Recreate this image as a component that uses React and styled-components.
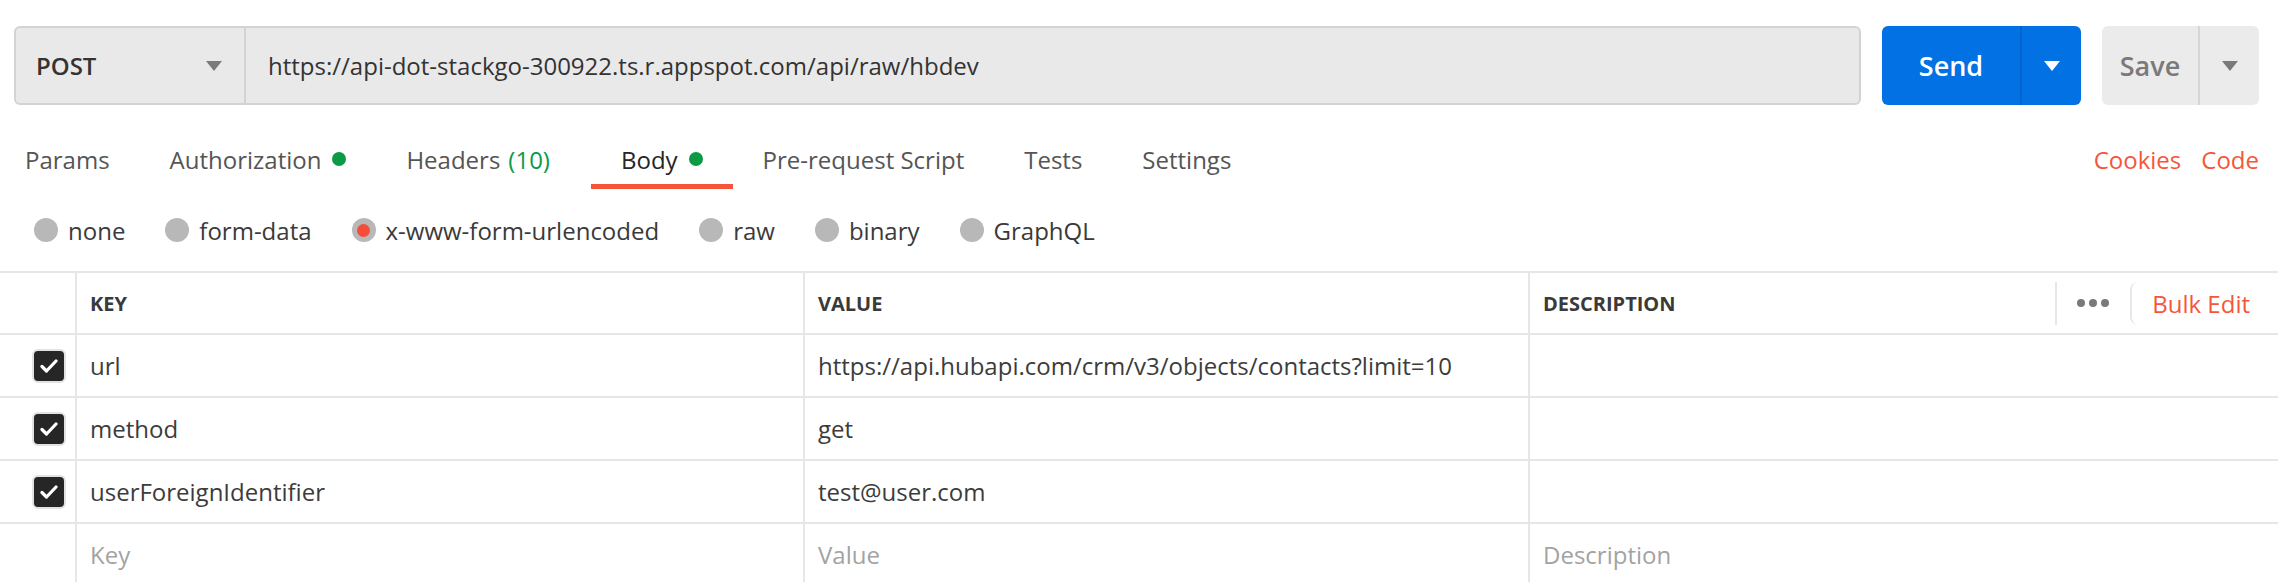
import React from "react";
import styled, { createGlobalStyle } from "styled-components";

const tabs = [
  { label: "Params" },
  { label: "Authorization", dot: true },
  { label: "Headers", count: "(10)" },
  { label: "Body", dot: true, active: true },
  { label: "Pre-request Script" },
  { label: "Tests" },
  { label: "Settings" },
];

const bodyModes = ["none", "form-data", "x-www-form-urlencoded", "raw", "binary", "GraphQL"];

const rows = [
  { key: "url", value: "https://api.hubapi.com/crm/v3/objects/contacts?limit=10" },
  { key: "method", value: "get" },
  { key: "userForeignIdentifier", value: "test@user.com" },
];

function Caret({ color }) {
  return (
    <svg width="16" height="10" viewBox="0 0 16 10">
      <path d="M0 0 H16 L8 10 Z" fill={color} />
    </svg>
  );
}

function Check() {
  return (
    <svg width="18" height="14" viewBox="0 0 18 14">
      <path
        d="M2 7.5 L6.5 12 L16 2"
        fill="none"
        stroke="#fff"
        strokeWidth="3.2"
        strokeLinecap="round"
        strokeLinejoin="round"
      />
    </svg>
  );
}

export default function App() {
  return (
    <>
      <GlobalStyle />
      <Page>
        <TopBar>
          <RequestBox>
            <MethodSelect>
              <span>POST</span>
              <Caret color="#7a7a7a" />
            </MethodSelect>
            <UrlText>https://api-dot-stackgo-300922.ts.r.appspot.com/api/raw/hbdev</UrlText>
          </RequestBox>
          <SplitButton $primary>
            <SplitMain $primary $width={140}>Send</SplitMain>
            <SplitArrow>
              <Caret color="#fff" />
            </SplitArrow>
          </SplitButton>
          <SplitButton>
            <SplitMain $width={98}>Save</SplitMain>
            <SplitArrow>
              <Caret color="#7a7a7a" />
            </SplitArrow>
          </SplitButton>
        </TopBar>

        <TabBar>
          {tabs.map((t) => (
            <Tab key={t.label} $active={t.active}>
              {t.label}
              {t.count && <Count>{t.count}</Count>}
              {t.dot && <GreenDot />}
            </Tab>
          ))}
          <TabLinks>
            <OrangeLink>Cookies</OrangeLink>
            <OrangeLink>Code</OrangeLink>
          </TabLinks>
        </TabBar>

        <RadioRow>
          {bodyModes.map((m) => (
            <RadioItem key={m}>
              <RadioCircle $selected={m === "x-www-form-urlencoded"} />
              {m}
            </RadioItem>
          ))}
        </RadioRow>

        <Table>
          <CheckCell />
          <HeadCell>KEY</HeadCell>
          <HeadCell>VALUE</HeadCell>
          <HeadCell>
            DESCRIPTION
            <HeadTools>
              <ToolDivider />
              <Dots>
                <span />
                <span />
                <span />
              </Dots>
              <BulkEdit>Bulk Edit</BulkEdit>
            </HeadTools>
          </HeadCell>

          {rows.map((r) => (
            <React.Fragment key={r.key}>
              <CheckCell>
                <CheckBox>
                  <Check />
                </CheckBox>
              </CheckCell>
              <Cell>{r.key}</Cell>
              <Cell>{r.value}</Cell>
              <Cell />
            </React.Fragment>
          ))}

          <CheckCell />
          <Cell $placeholder>Key</Cell>
          <Cell $placeholder>Value</Cell>
          <Cell $placeholder>Description</Cell>
        </Table>
      </Page>
    </>
  );
}

const GlobalStyle = createGlobalStyle`
  * { box-sizing: border-box; }
  body {
    margin: 0;
    background: #fff;
    font-family: "Open Sans", "Noto Sans", sans-serif;
    color: #3c3c3c;
  }
`;

const Page = styled.div`
  width: 2278px;
  height: 582px;
  overflow: hidden;
`;

const TopBar = styled.div`
  display: flex;
  gap: 21px;
  padding: 26px 19px 0 14px;
`;

const RequestBox = styled.div`
  flex: 1;
  height: 79px;
  display: flex;
  background: #e9e9e9;
  border: 2px solid #d3d3d3;
  border-radius: 6px;
`;

const MethodSelect = styled.div`
  width: 230px;
  display: flex;
  align-items: center;
  justify-content: space-between;
  padding: 0 22px 0 20px;
  border-right: 2px solid #d3d3d3;
  font-size: 24px;
  font-weight: 600;
  color: #333;
`;

const UrlText = styled.div`
  display: flex;
  align-items: center;
  padding-left: 22px;
  font-size: 24px;
  color: #333;
`;

const SplitButton = styled.div`
  display: flex;
  height: 79px;
  border-radius: 6px;
  background: ${(p) => (p.$primary ? "#0271e4" : "#ebebeb")};
`;

const SplitMain = styled.div`
  width: ${(p) => p.$width}px;
  display: flex;
  align-items: center;
  justify-content: center;
  font-size: 27px;
  font-weight: 600;
  color: ${(p) => (p.$primary ? "#fff" : "#7a7a7a")};
  border-right: 2px solid ${(p) => (p.$primary ? "#0263cc" : "#d6d6d6")};
`;

const SplitArrow = styled.div`
  width: 59px;
  display: flex;
  align-items: center;
  justify-content: center;
`;

const TabBar = styled.div`
  display: flex;
  height: 60px;
  margin-top: 24px;
`;

const Tab = styled.div`
  display: flex;
  align-items: center;
  padding: 0 30px;
  font-size: 24px;
  color: ${(p) => (p.$active ? "#262626" : "#555")};
  box-shadow: ${(p) => (p.$active ? "inset 0 -5px 0 #f5563a" : "none")};
  white-space: nowrap;

  &:first-child {
    padding-left: 25px;
  }
`;

const Count = styled.span`
  color: #0c9a47;
  margin: 0 11px 0 8px;
`;

const GreenDot = styled.span`
  width: 14px;
  height: 14px;
  border-radius: 50%;
  background: #0c9a47;
  margin-left: 11px;
`;

const TabLinks = styled.div`
  margin-left: auto;
  display: flex;
  align-items: center;
  gap: 20px;
  padding-right: 19px;
`;

const OrangeLink = styled.span`
  font-size: 24px;
  color: #f5563a;
`;

const RadioRow = styled.div`
  display: flex;
  align-items: center;
  gap: 40px;
  height: 82px;
  padding-left: 34px;
`;

const RadioItem = styled.div`
  display: flex;
  align-items: center;
  gap: 10px;
  font-size: 24px;
  color: #3a3a3a;
`;

const RadioCircle = styled.span`
  width: 24px;
  height: 24px;
  border-radius: 50%;
  background: #b8b8b8;
  display: flex;
  align-items: center;
  justify-content: center;

  &::after {
    content: "";
    display: ${(p) => (p.$selected ? "block" : "none")};
    width: 13px;
    height: 13px;
    border-radius: 50%;
    background: #f74c38;
  }
`;

const Table = styled.div`
  display: grid;
  grid-template-columns: 75px 728px 725px 1fr;
  grid-template-rows: 62px repeat(4, 63px);
  border-top: 2px solid #e6e6e6;
`;

const CheckCell = styled.div`
  display: flex;
  align-items: center;
  justify-content: flex-end;
  padding-right: 9px;
  border-bottom: 2px solid #e6e6e6;
`;

const HeadCell = styled.div`
  display: flex;
  align-items: center;
  padding-left: 13px;
  border-left: 2px solid #e6e6e6;
  border-bottom: 2px solid #e6e6e6;
  font-size: 20px;
  font-weight: 700;
  color: #3a3a3a;
`;

const HeadTools = styled.div`
  margin-left: auto;
  display: flex;
  align-items: center;
  height: 100%;
`;

const ToolDivider = styled.span`
  width: 2px;
  height: 43px;
  background: #e6e6e6;
`;

const Dots = styled.span`
  display: flex;
  gap: 4px;
  padding: 0 21px 0 20px;

  span {
    width: 8px;
    height: 8px;
    border-radius: 50%;
    background: #7a7a7a;
  }
`;

const BulkEdit = styled.span`
  display: flex;
  align-items: center;
  height: 43px;
  padding: 0 28px 0 20px;
  border-left: 2px solid #e8e8e8;
  border-radius: 8px 0 0 8px;
  font-size: 24px;
  font-weight: 400;
  color: #f5563a;
`;

const Cell = styled.div`
  display: flex;
  align-items: center;
  padding-left: 13px;
  border-left: 2px solid #e6e6e6;
  border-bottom: 2px solid #e6e6e6;
  font-size: 24px;
  color: ${(p) => (p.$placeholder ? "#a3a3a3" : "#3c3c3c")};
  white-space: nowrap;
`;

const CheckBox = styled.span`
  width: 34px;
  height: 34px;
  border-radius: 6px;
  background: #262626;
  border: 2px solid #e2e2e2;
  display: flex;
  align-items: center;
  justify-content: center;
`;
